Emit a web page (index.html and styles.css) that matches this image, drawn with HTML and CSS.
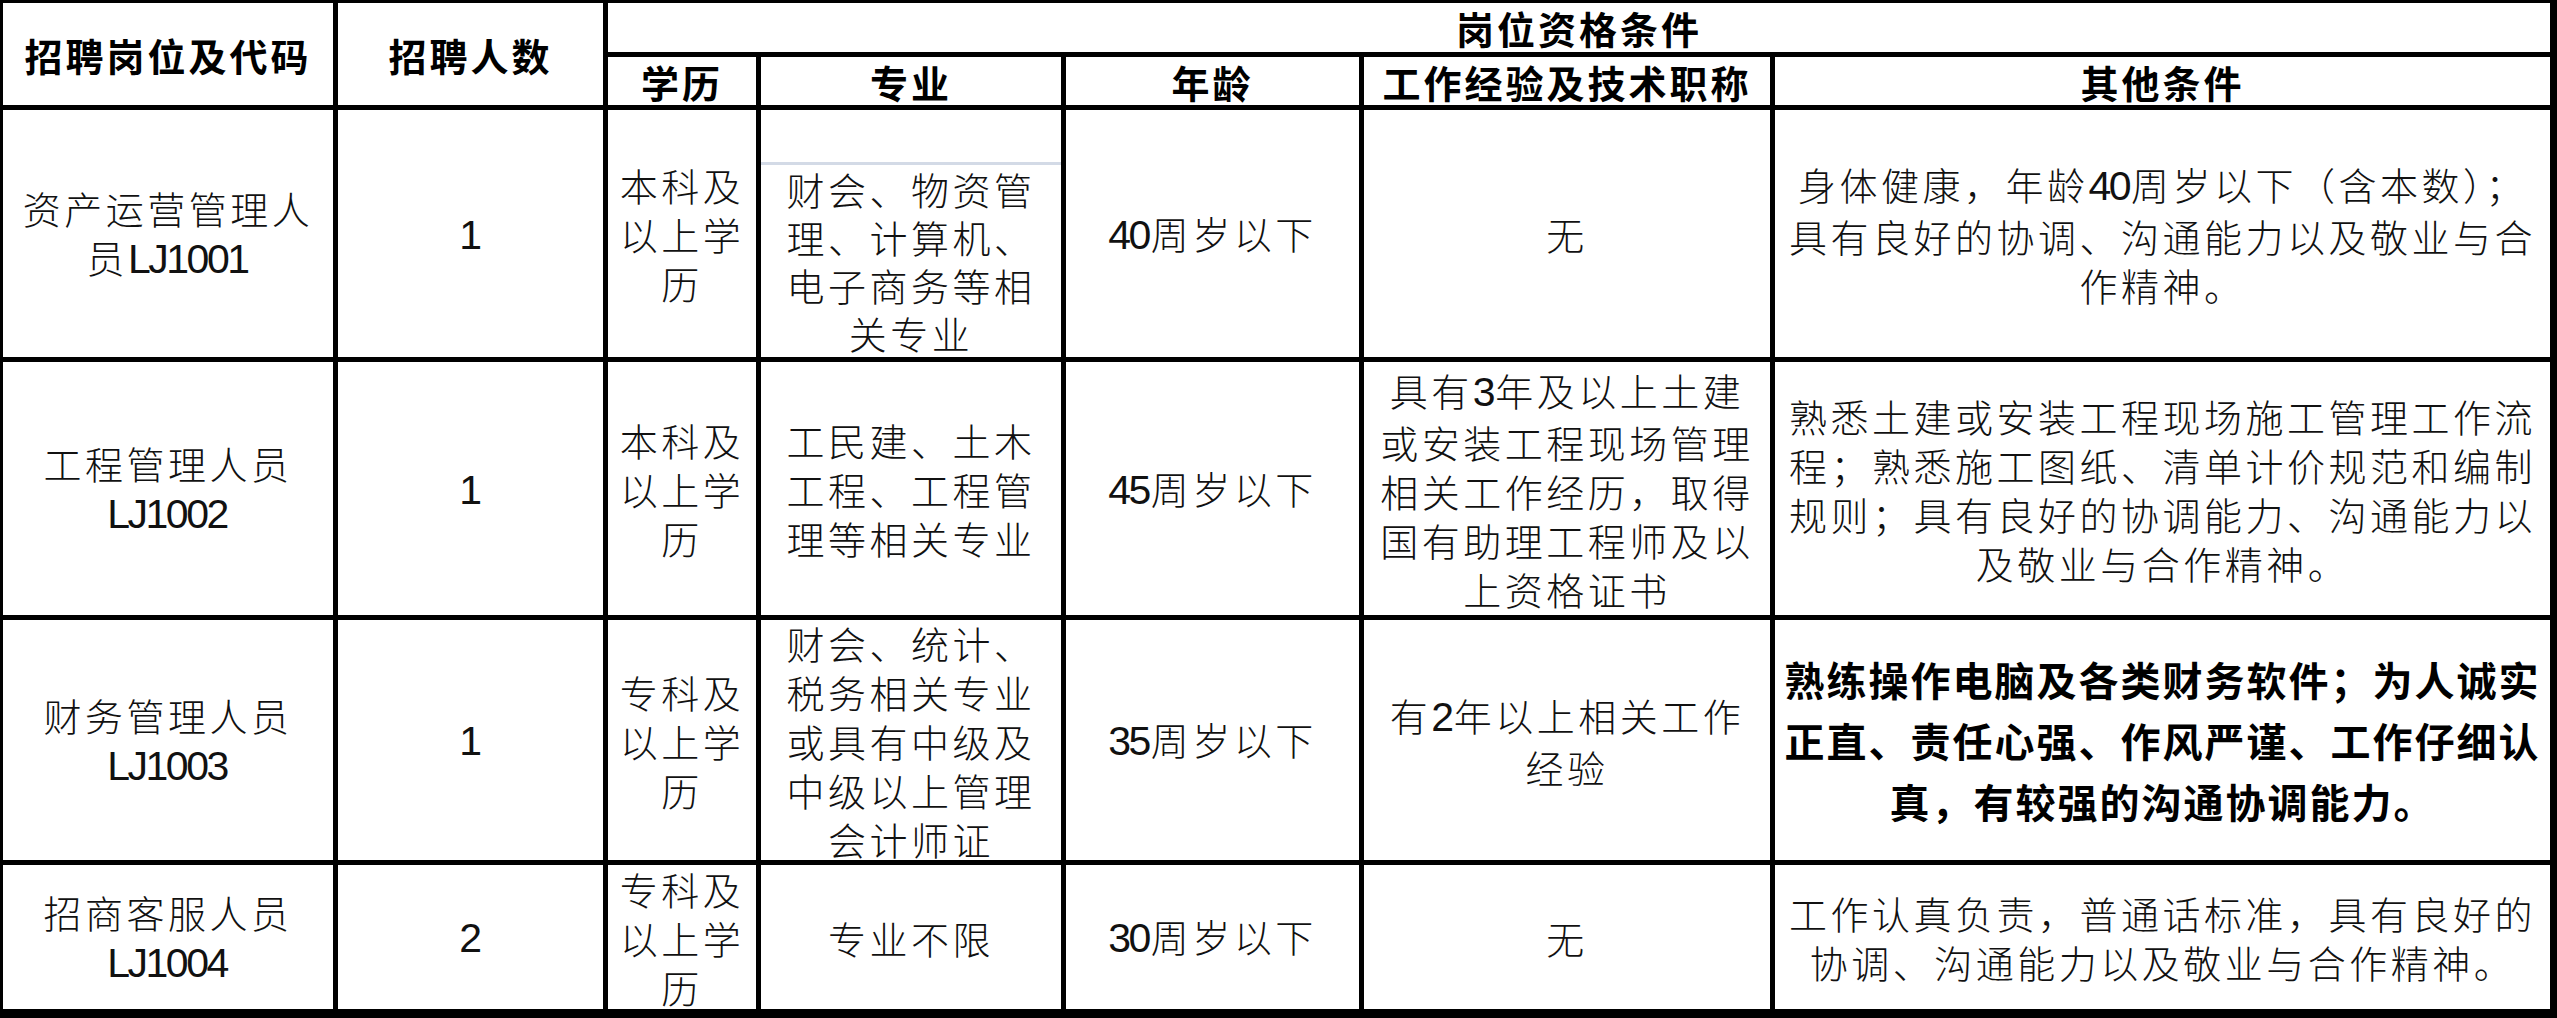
FILE: index.html
```html
<!DOCTYPE html>
<html lang="zh-CN">
<head>
<meta charset="utf-8">
<title>招聘岗位</title>
<link rel="stylesheet" href="styles.css">
</head>
<body>
<div class="sheet">
  <div class="cell hd span-rows"><div class="t">招聘岗位及代码</div></div>
  <div class="cell hd span-rows"><div class="t">招聘人数</div></div>
  <div class="cell hd span-cols"><div class="t">岗位资格条件</div></div>
  <div class="cell hd"><div class="t">学历</div></div>
  <div class="cell hd"><div class="t">专业</div></div>
  <div class="cell hd"><div class="t">年龄</div></div>
  <div class="cell hd"><div class="t">工作经验及技术职称</div></div>
  <div class="cell hd"><div class="t">其他条件</div></div>

  <div class="cell"><div class="t">资产运营管理人<br>员<span class="n">LJ1001</span></div></div>
  <div class="cell"><div class="t"><span class="n">1</span></div></div>
  <div class="cell"><div class="t">本科及<br>以上学<br>历</div></div>
  <div class="cell top"><div class="t sel">财会、物资管<br>理、计算机、<br>电子商务等相<br>关专业</div></div>
  <div class="cell"><div class="t"><span class="n">40</span>周岁以下</div></div>
  <div class="cell"><div class="t">无</div></div>
  <div class="cell"><div class="t">身体健康，年龄<span class="n">40</span>周岁以下（含本数）；<br>具有良好的协调、沟通能力以及敬业与合<br>作精神。</div></div>

  <div class="cell"><div class="t">工程管理人员<br><span class="n">LJ1002</span></div></div>
  <div class="cell"><div class="t"><span class="n">1</span></div></div>
  <div class="cell"><div class="t">本科及<br>以上学<br>历</div></div>
  <div class="cell"><div class="t">工民建、土木<br>工程、工程管<br>理等相关专业</div></div>
  <div class="cell"><div class="t"><span class="n">45</span>周岁以下</div></div>
  <div class="cell"><div class="t">具有<span class="n">3</span>年及以上土建<br>或安装工程现场管理<br>相关工作经历，取得<br>国有助理工程师及以<br>上资格证书</div></div>
  <div class="cell"><div class="t">熟悉土建或安装工程现场施工管理工作流<br>程；熟悉施工图纸、清单计价规范和编制<br>规则；具有良好的协调能力、沟通能力以<br>及敬业与合作精神。</div></div>

  <div class="cell"><div class="t">财务管理人员<br><span class="n">LJ1003</span></div></div>
  <div class="cell"><div class="t"><span class="n">1</span></div></div>
  <div class="cell"><div class="t">专科及<br>以上学<br>历</div></div>
  <div class="cell"><div class="t">财会、统计、<br>税务相关专业<br>或具有中级及<br>中级以上管理<br>会计师证</div></div>
  <div class="cell"><div class="t"><span class="n">35</span>周岁以下</div></div>
  <div class="cell"><div class="t">有<span class="n">2</span>年以上相关工作<br>经验</div></div>
  <div class="cell"><div class="t strong">熟练操作电脑及各类财务软件；为人诚实<br>正直、责任心强、作风严谨、工作仔细认<br>真，有较强的沟通协调能力。</div></div>

  <div class="cell"><div class="t">招商客服人员<br><span class="n">LJ1004</span></div></div>
  <div class="cell"><div class="t"><span class="n">2</span></div></div>
  <div class="cell"><div class="t">专科及<br>以上学<br>历</div></div>
  <div class="cell"><div class="t">专业不限</div></div>
  <div class="cell"><div class="t"><span class="n">30</span>周岁以下</div></div>
  <div class="cell"><div class="t">无</div></div>
  <div class="cell"><div class="t">工作认真负责，普通话标准，具有良好的<br>协调、沟通能力以及敬业与合作精神。</div></div>
</div>
</body>
</html>
```

FILE: styles.css
```css
html, body {
  margin: 0;
  padding: 0;
  background: #fff;
  overflow: hidden;
}

.sheet {
  box-sizing: border-box;
  width: 2557px;
  height: 1018px;
  display: grid;
  grid-template-columns: 330px 265px 148px 300px 293px 406px 775px;
  grid-template-rows: 49px 48px 247px 253px 240px 144px;
  gap: 5px;
  padding: 3px 7px 9px 3px;
  background: #000;
  font-family: "Noto Sans CJK SC", "Noto Sans CJK JP", sans-serif;
  color: #000;
}

.cell {
  background: #fff;
  display: flex;
  flex-direction: column;
  justify-content: center;
  align-items: center;
  text-align: center;
  white-space: nowrap;
  font-size: 38px;
  letter-spacing: 3.5px;
  line-height: 49px;
  font-weight: 300;
  color: #111;
  min-width: 0;
  min-height: 0;
}

.span-rows {
  grid-row: span 2;
}

.span-cols {
  grid-column: span 5;
}

.hd {
  font-weight: 700;
  letter-spacing: 3px;
  color: #000;
}

.top {
  justify-content: flex-start;
  align-items: stretch;
  padding-top: 52px;
}

.sel {
  border-top: 3px solid #d3dae6;
  line-height: 48px;
}

.strong {
  font-size: 40px;
  letter-spacing: 2px;
  line-height: 61px;
  font-weight: 700;
  color: #000;
}

.n {
  font-family: "Liberation Sans", Arial, sans-serif;
  font-size: 41px;
  letter-spacing: -2.5px;
  font-weight: 400;
  padding-right: 2px;
}
```
